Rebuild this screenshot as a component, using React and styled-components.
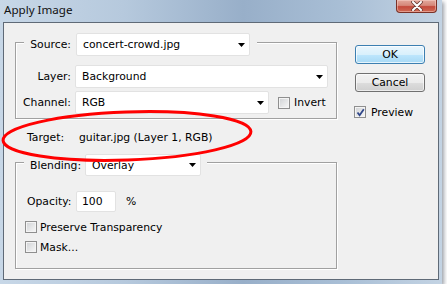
import React from 'react';
import styled, { createGlobalStyle } from 'styled-components';

const GlobalStyle = createGlobalStyle`
  html, body {
    margin: 0;
    padding: 0;
    background: #fff;
  }
  body {
    font-family: "DejaVu Sans", Tahoma, sans-serif;
    font-size: 10.8px;
    color: #000;
  }
`;

const Window = styled.div`
  position: relative;
  width: 442px;
  height: 284px;
  box-sizing: border-box;
  padding: 0 3px 4px 3px;
  display: flex;
  flex-direction: column;
  background: linear-gradient(90deg, #c7d7e7 0%, #b6c9dd 28%, #98afc9 55%, #a9bfd6 78%, #c3d3e3 100%);
  box-shadow: 2px 2px 4px rgba(60, 70, 85, 0.5);
`;

const TitleBar = styled.div`
  height: 22px;
  display: flex;
  align-items: flex-start;
  justify-content: space-between;
`;

const Title = styled.div`
  font-family: "Noto Sans", "Open Sans", sans-serif;
  font-size: 11.6px;
  line-height: 19px;
  padding-left: 1px;
  color: #111;
`;

const CloseButton = styled.div`
  width: 41px;
  height: 13px;
  margin-right: 2px;
  box-sizing: border-box;
  border: 1px solid #7a3228;
  border-top: none;
  border-radius: 0 0 4px 4px;
  background: linear-gradient(180deg, #e2a89c 0%, #d6887a 45%, #c44a3c 55%, #cf6a55 100%);
  box-shadow: inset 0 0 0 1px rgba(255, 220, 210, 0.45);
  display: flex;
  align-items: center;
  justify-content: center;
`;

const Client = styled.div`
  flex: 1;
  display: flex;
  align-items: flex-start;
  box-sizing: border-box;
  padding: 10px 0 0 11px;
  background: #f0f0f0;
  border: 1px solid #5f6a77;
`;

const LeftCol = styled.div`
  width: 322px;
  display: flex;
  flex-direction: column;
`;

const RightCol = styled.div`
  margin-left: 18px;
  margin-top: 12px;
  display: flex;
  flex-direction: column;
`;

const GroupBox = styled.div`
  margin-top: ${(p) => p.$top}px;
  padding-bottom: ${(p) => p.$bottom}px;
  display: flex;
  flex-direction: column;
  border: 1px solid #a0a0a0;
  box-shadow: inset 1px 1px 0 #fff, 1px 1px 0 #fff;
`;

const Legend = styled.div`
  align-self: flex-start;
  display: flex;
  align-items: center;
  gap: ${(p) => p.$gap}px;
  margin: ${(p) => p.$top}px 0 0 8px;
  padding: 0 ${(p) => p.$right}px 0 6px;
  background: #f0f0f0;
`;

const Row = styled.div`
  display: flex;
  align-items: center;
  gap: ${(p) => p.$gap || 4}px;
  margin: ${(p) => p.$top || 0}px 0 0 ${(p) => p.$left || 0}px;
  height: ${(p) => p.$height || 23}px;
`;

const Label = styled.span`
  width: ${(p) => (p.$width ? `${p.$width}px` : 'auto')};
  text-align: ${(p) => (p.$left ? 'left' : 'right')};
  white-space: nowrap;
`;

const Select = styled.div`
  width: ${(p) => p.$width}px;
  height: ${(p) => p.$height || 23}px;
  box-sizing: border-box;
  display: flex;
  align-items: center;
  justify-content: space-between;
  padding: 0 4px 0 6px;
  background: #fff;
  border: 1px solid #e2e2e2;
  border-radius: 2px;
`;

const TextBox = styled.div`
  width: 40px;
  height: 21px;
  box-sizing: border-box;
  display: flex;
  align-items: center;
  padding-left: 5px;
  background: #fff;
  border: 1px solid #e2e2e2;
  border-radius: 2px;
`;

const Percent = styled.span`
  margin-left: 5px;
`;

const TargetRow = styled.div`
  display: flex;
  margin: 11px 0 0 12px;
  height: 14px;
  align-items: center;
`;

const CheckRow = styled.label`
  display: flex;
  align-items: center;
  gap: ${(p) => p.$gap || 3}px;
  height: 20px;
  margin: ${(p) => p.$top || 0}px 0 0 ${(p) => p.$left || 0}px;
`;

const Box = styled.span`
  width: 12px;
  height: 12px;
  box-sizing: border-box;
  display: flex;
  align-items: center;
  justify-content: center;
  border: 1px solid #8f8f8f;
  background: linear-gradient(135deg, #cfd1d4 0%, #e6e7e8 55%, #f8f8f8 100%);
  box-shadow: inset 0 0 0 1px #f4f4f4;
`;

const Button = styled.div`
  width: 70px;
  height: 19px;
  margin-top: ${(p) => p.$top || 0}px;
  box-sizing: border-box;
  display: flex;
  align-items: center;
  justify-content: center;
  border-radius: 3px;
  border: 1px solid ${(p) => (p.$primary ? '#3c7fb1' : '#707070')};
  background: ${(p) =>
    p.$primary
      ? 'linear-gradient(180deg, #eaf6fd 0%, #d9f0fc 50%, #bee6fd 51%, #a7d9f5 100%)'
      : 'linear-gradient(180deg, #f2f2f2 0%, #ebebeb 50%, #dddddd 51%, #cfcfcf 100%)'};
  box-shadow: inset 0 0 0 1px ${(p) => (p.$primary ? 'rgba(255,255,255,0.7)' : 'rgba(255,255,255,0.6)')};
`;

const Annotation = styled.svg`
  position: absolute;
  left: 0;
  top: 0;
  pointer-events: none;
`;

const Arrow = () => (
  <svg width="7" height="4" viewBox="0 0 7 4">
    <path d="M0 0h7L3.5 4z" fill="#000" />
  </svg>
);

const Dropdown = ({ width, height, children }) => (
  <Select $width={width} $height={height}>
    <span>{children}</span>
    <Arrow />
  </Select>
);

const Check = ({ checked, label, gap, top, left }) => (
  <CheckRow $gap={gap} $top={top} $left={left}>
    <Box>
      {checked && (
        <svg width="9" height="9" viewBox="0 0 9 9">
          <path d="M1.5 4.5L3.6 7.2L7.8 1.2" fill="none" stroke="#31478a" strokeWidth="1.8" />
        </svg>
      )}
    </Box>
    <span>{label}</span>
  </CheckRow>
);

export default function App() {
  return (
    <>
      <GlobalStyle />
      <Window>
        <TitleBar>
          <Title>Apply Image</Title>
          <CloseButton>
            <svg width="14" height="10" viewBox="0 0 14 10">
              <path d="M3 1L11 9M11 1L3 9" stroke="#6a3a33" strokeWidth="3.6" strokeLinecap="round" />
              <path d="M3 1L11 9M11 1L3 9" stroke="#fff" strokeWidth="2" strokeLinecap="round" />
            </svg>
          </CloseButton>
        </TitleBar>
        <Client>
          <LeftCol>
            <GroupBox $top={9} $bottom={4}>
              <Legend $top={-10} $gap={5} $right={7}>
                <Label $width={41}>Source:</Label>
                <Dropdown width={174}>concert-crowd.jpg</Dropdown>
              </Legend>
              <Row $top={9} $left={4}>
                <Label $width={51}>Layer:</Label>
                <Dropdown width={253}>Background</Dropdown>
              </Row>
              <Row $top={3} $left={4}>
                <Label $width={51}>Channel:</Label>
                <Dropdown width={194}>RGB</Dropdown>
                <Check label="Invert" gap={4} left={5} />
              </Row>
            </GroupBox>
            <TargetRow>
              <Label $width={52} $left>Target:</Label>
              <span>guitar.jpg (Layer 1, RGB)</span>
            </TargetRow>
            <GroupBox $top={18} $bottom={11}>
              <Legend $top={-9} $gap={4} $right={6}>
                <Label>Blending:</Label>
                <Dropdown width={116} height={22}>Overlay</Dropdown>
              </Legend>
              <Row $top={15} $left={11} $gap={5} $height={21}>
                <Label $width={44}>Opacity:</Label>
                <TextBox>100</TextBox>
                <Percent>%</Percent>
              </Row>
              <Check label="Preserve Transparency" top={5} left={9} />
              <Check label="Mask..." left={9} />
            </GroupBox>
          </LeftCol>
          <RightCol>
            <Button $primary>OK</Button>
            <Button $top={9}>Cancel</Button>
            <Check checked label="Preview" gap={5} top={10} left={-1} />
          </RightCol>
        </Client>
        <Annotation width="447" height="290" viewBox="0 0 447 290">
          <ellipse cx="127" cy="136" rx="124" ry="24" transform="rotate(-2 127 136)" fill="none" stroke="#f00" strokeWidth="3" />
        </Annotation>
      </Window>
    </>
  );
}
